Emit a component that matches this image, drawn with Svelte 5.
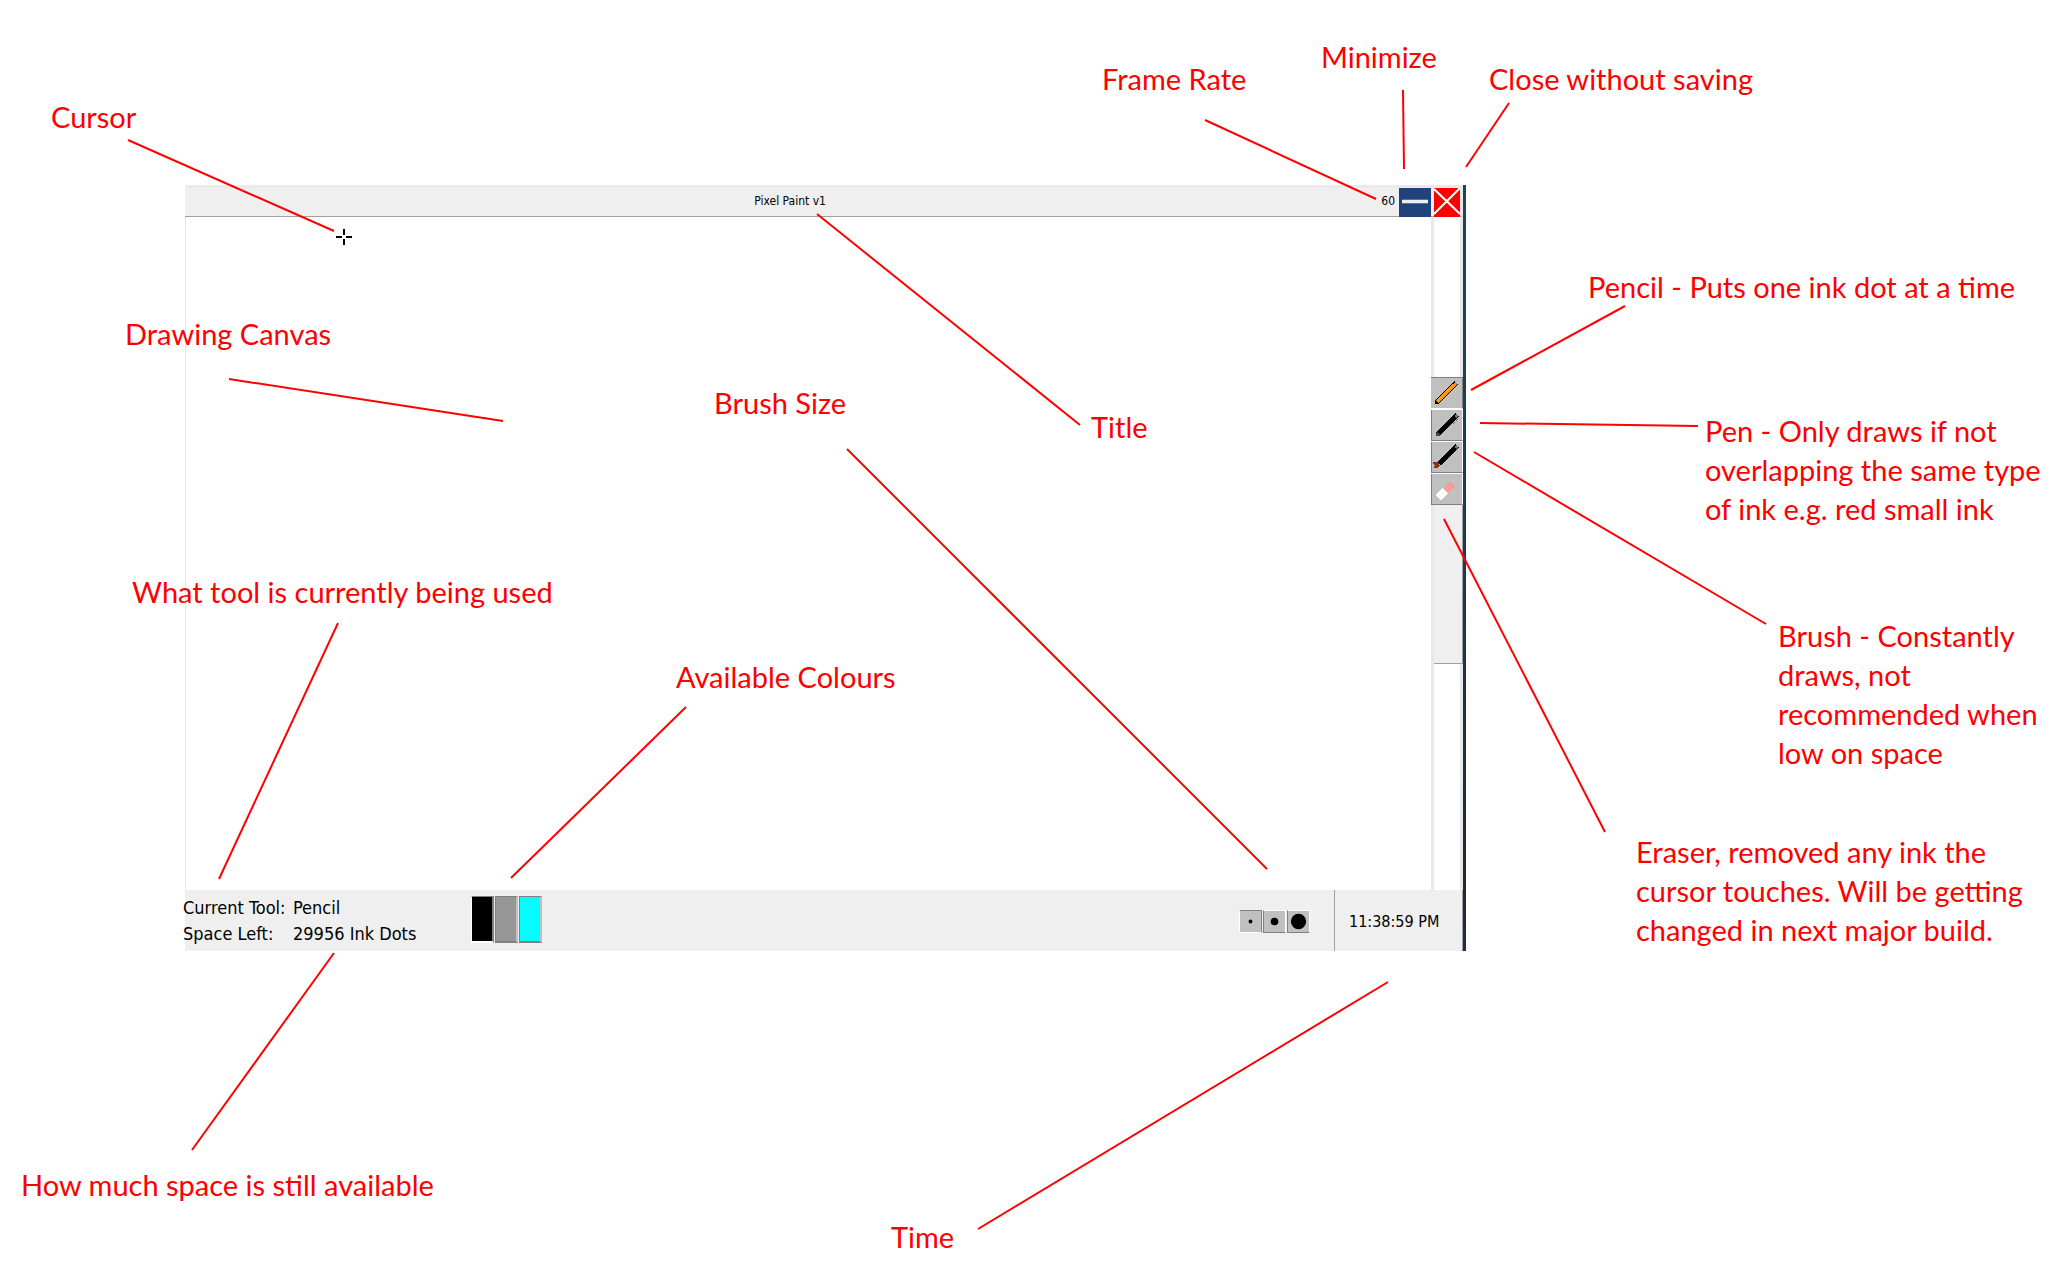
<script>
  const notes = [
    { x: 51, y: 97, lines: ['Cursor'] },
    { x: 1102, y: 59, lines: ['Frame Rate'] },
    { x: 1321, y: 37, lines: ['Minimize'] },
    { x: 1489, y: 59, lines: ['Close without saving'] },
    { x: 125, y: 314, lines: ['Drawing Canvas'] },
    { x: 714, y: 383, lines: ['Brush Size'] },
    { x: 1091, y: 407, lines: ['Title'] },
    { x: 132, y: 572, lines: ['What tool is currently being used'] },
    { x: 676, y: 657, lines: ['Available Colours'] },
    { x: 21, y: 1165, lines: ['How much space is still available'] },
    { x: 891, y: 1217, lines: ['Time'] },
    { x: 1588, y: 267, lines: ['Pencil - Puts one ink dot at a time'] },
    { x: 1705, y: 411, lines: ['Pen - Only draws if not', 'overlapping the same type', 'of ink e.g. red small ink'] },
    { x: 1778, y: 616, lines: ['Brush - Constantly', 'draws, not', 'recommended when', 'low on space'] },
    { x: 1636, y: 832, lines: ['Eraser, removed any ink the', 'cursor touches. Will be getting', 'changed in next major build.'] },
  ];

  const pointers = [
    [128, 140, 334, 231],
    [1205, 120, 1376, 199],
    [1403, 90, 1404, 169],
    [1509, 103, 1466, 167],
    [817, 214, 1080, 425],
    [229, 379, 503, 421],
    [847, 449, 1267, 869],
    [338, 623, 219, 879],
    [686, 707, 511, 878],
    [334, 953, 192, 1150],
    [1388, 982, 978, 1229],
    [1625, 306, 1471, 390],
    [1698, 426, 1480, 423],
    [1766, 624, 1474, 452],
    [1605, 832, 1444, 519],
  ];

  const colours = ['black', 'grey', 'cyan'];
  const sizes = [{ name: 'Small', r: 2 }, { name: 'Medium', r: 4 }, { name: 'Large', r: 8 }];
  let colour = $state('black');
  let size = $state('Small');
  let tool = $state('Pencil');
</script>

<main class="sheet">
  <section class="window" aria-label="Pixel Paint">
    <div class="app">
      <header class="titlebar">
        <h1>Pixel Paint v1</h1>
        <span class="fps">60</span>
        <button class="minimize" aria-label="Minimize">
          <svg viewBox="0 0 32 29"><path d="M3 11h26v5H3z" fill="#3f7e9c" /><path d="M3 12h26v3H3z" fill="#efefef" /></svg>
        </button>
        <button class="close" aria-label="Close without saving">
          <svg viewBox="0 0 26 29"><path d="M0 1 26 26M26 0 0 26" stroke="#fff" stroke-width="2" /></svg>
        </button>
      </header>

      <div class="work">
        <div class="canvas"></div>
        <aside class="rail">
          <nav class="tools" aria-label="Tools">
            <button class:active={tool === 'Pencil'} aria-label="Pencil" onclick={() => (tool = 'Pencil')}>
              <svg viewBox="0 0 30 30" shape-rendering="crispEdges">
                <path d="M5 25 25 5" stroke="#000" stroke-width="5" />
                <path d="M6 24 23 7" stroke="#f79a1c" stroke-width="3" />
                <path d="m4 26v-3l3 3z" fill="#000" />
                <path d="m22 6 2-2 2 2-2 2z" fill="#d98872" />
              </svg>
            </button>
            <button aria-label="Pen" class:active={tool === 'Pen'} onclick={() => (tool = 'Pen')}>
              <svg viewBox="0 0 30 30" shape-rendering="crispEdges">
                <path d="M5 25 25 5" stroke="#000" stroke-width="5" />
                <path d="M4 26v-3l1-1 3 3-1 1z" fill="#484848" />
                <path d="m22 6 2-2 2 2-2 2z" fill="#777" />
                <path d="m21 14 6-6" stroke="#666" stroke-dasharray="1 1" />
              </svg>
            </button>
            <button aria-label="Brush" class:active={tool === 'Brush'} onclick={() => (tool = 'Brush')}>
              <svg viewBox="0 0 30 30" shape-rendering="crispEdges">
                <path d="M7 22 25 4" stroke="#000" stroke-width="5" />
                <path d="m22 5 2-2 2 2-2 2z" fill="#777" />
                <path d="M1 20h5l2 4-3 2H2v-2l1-1-2-1z" fill="#8b3510" />
              </svg>
            </button>
            <button aria-label="Eraser" class:active={tool === 'Eraser'} onclick={() => (tool = 'Eraser')}>
              <svg viewBox="0 0 30 30" shape-rendering="crispEdges">
                <path d="m11 14 7-7 5 5-7 7z" fill="#ff9a9a" /><path d="m3 21 7-7 6 6-7 6z" fill="#fff" />
              </svg>
            </button>
          </nav>
          <div class="panel"></div>
        </aside>
      </div>

      <footer class="status">
        <dl>
          <dt>Current Tool:</dt><dd>{tool}</dd>
          <dt>Space Left:</dt><dd>29956 Ink Dots</dd>
        </dl>
        <div class="colours">
          {#each colours as c}
            <button class={c} class:active={colour === c} aria-label={c} onclick={() => (colour = c)}></button>
          {/each}
        </div>
        <div class="sizes">
          {#each sizes as s}
            <button class:active={size === s.name} aria-label={s.name} onclick={() => (size = s.name)}>
              <svg viewBox="0 0 22 22"><circle cx="11" cy="11" r={s.r} /></svg>
            </button>
          {/each}
        </div>
        <time>11:38:59 PM</time>
      </footer>
    </div>
  </section>

  <svg class="crosshair" viewBox="0 0 16 16" aria-hidden="true">
    <path d="M7 0h2v6H7zM7 10h2v6H7zM0 7h6v2H0zM10 7h6v2h-6z" />
  </svg>

  <svg class="pointers" aria-hidden="true">
    {#each pointers as [x1, y1, x2, y2]}
      <line {x1} {y1} {x2} {y2} />
    {/each}
  </svg>

  {#each notes as note}
    <p class="note" style="left: {note.x}px; top: {note.y}px">
      {#each note.lines as line}<span>{line}</span>{/each}
    </p>
  {/each}
</main>

<style>
  :global(body) { margin: 0; background: #fff; }
  .sheet { position: relative; min-height: 100vh; overflow: hidden; }
  button { margin: 0; padding: 0; border: 0; box-sizing: border-box; display: block; }
  svg { display: block; }

  .window {
    position: absolute; left: 185px; top: 185px; width: 1281px; height: 766px;
    box-sizing: border-box; display: flex; padding-right: 3px;
    background: linear-gradient(#1b4661, #1c3a50 50%, #1e2834 92%, #1f2c52);
    font-family: "DejaVu Sans Condensed", "DejaVu Sans", sans-serif; color: #000;
  }
  .app { flex: 1; display: flex; flex-direction: column; background: #fff; }

  .titlebar {
    display: flex; align-items: center; height: 32px; box-sizing: border-box;
    border-top: 3px solid #eaeaea; border-bottom: 1px solid #a0a0a0; border-right: 3px solid #e8e8e8;
    background: #efefef;
  }
  h1 { flex: 1; margin: 0; padding-left: 14px; text-align: center; font-size: 12px; line-height: 16px; font-weight: 400; }
  h1, .fps { padding-bottom: 2px; }
  .fps { padding-right: 4px; font-size: 12px; line-height: 16px; }
  .titlebar button { height: 29px; margin-bottom: -1px; }
  .titlebar svg { height: 29px; }
  .minimize { width: 32px; background: #22427c; }
  .close { width: 26px; margin-left: 3px; background: #f00; }

  .work { flex: 1; display: flex; }
  .canvas { flex: 1; border-left: 1px solid #e8e8e8; }
  .rail {
    width: 32px; box-sizing: border-box; padding-top: 160px;
    border: solid #e8e8e8; border-width: 0 3px;
  }
  .tools { display: grid; gap: 1px; margin: 0 -3px; background: #fff; }
  .tools button {
    height: 31px; background: #c0c0c0;
    border: solid #808080; border-width: 0 1px 1px; border-right-color: #fff;
  }
  .tools button.active { height: 32px; border-width: 1px 1px 1px 0; border-color: #808080 #808080 #fff #fff; }
  .tools svg { width: 30px; height: 30px; }
  .panel {
    height: 158px; margin-right: -3px; background: #efefef;
    border: solid #a0a0a0; border-width: 0 1px 1px 0;
  }

  .status { display: flex; align-items: center; height: 61px; background: #efefef; }
  dl {
    display: grid; grid-template-columns: 110px 1fr; width: 288px; margin: 0 0 0 -2px;
    font-size: 18px; line-height: 26px; white-space: nowrap;
  }
  dt, dd { margin: 0; }
  .colours { display: flex; gap: 1px; padding-bottom: 2px; }
  .colours button {
    width: 23px; height: 47px; border: 2px solid #fff; border-color: #808080 #c0c0c0 #808080 #808080;
    border-width: 1px 2px 2px 1px;
  }
  .colours button.active { border-color: #808080 #808080 #fff #fff; }
  .black { background: #000; }
  .grey { background: #969696; }
  .cyan { background: #0ff; }
  .sizes { display: flex; gap: 1px; margin-left: auto; padding: 2px 24px 0 0; }
  .sizes button {
    width: 23px; height: 23px; background: #c0c0c0;
    border: 1px solid; border-color: #fff #fff #808080 #808080;
  }
  .sizes button.active { border-color: #808080 #808080 #fff #fff; }
  .sizes svg { width: 21px; height: 21px; }
  time {
    align-self: stretch; width: 129px; box-sizing: border-box; padding-left: 14px;
    border-left: 1px solid #a0a0a0; border-right: 1px solid #a0a0a0; font-size: 16px; line-height: 63px;
  }

  .crosshair { position: absolute; left: 336px; top: 229px; width: 16px; height: 16px; }
  .pointers { position: absolute; inset: 0; width: 100%; height: 100%; pointer-events: none; }
  .pointers line { stroke: #f00; stroke-width: 2; }
  .note {
    position: absolute; margin: 0; color: #f00; white-space: nowrap;
    font-family: Lato, Carlito, sans-serif; font-size: 29px; line-height: 39px;
  }
  .note span { display: block; }
</style>
